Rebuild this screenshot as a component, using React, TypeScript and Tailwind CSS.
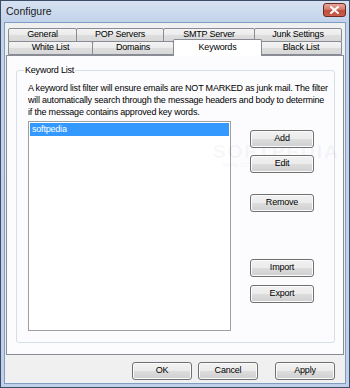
const rowOne = [
  { name: "General", w: 68 },
  { name: "POP Servers", w: 87 },
  { name: "SMTP Server", w: 91 },
  { name: "Junk Settings", w: 87 },
]

const rowTwo = [
  { name: "White List", w: 84 },
  { name: "Domains", w: 81 },
  { name: "Keywords", w: 87, active: true },
  { name: "Black List", w: 81 },
]

const btn =
  "relative z-10 flex items-center justify-center h-[18px] rounded-[3px] border border-[#707070] bg-[linear-gradient(to_bottom,#f2f2f2_0%,#ebebeb_50%,#dddddd_50%,#cfcfcf_100%)] shadow-[inset_0_0_0_1px_#fbfbfb] text-black"

function Tab({ name, w, active }: { name: string; w: number; active?: boolean }) {
  if (active) {
    return (
      <div
        className="relative z-10 -mt-[2px] -mb-[1px] -mx-[1px] h-[17px] flex items-center justify-center border border-b-0 border-[#898c95] bg-white rounded-t-[2px]"
        style={{ width: w + 2 }}
      >
        {name}
      </div>
    )
  }
  return (
    <div
      className="h-[14px] flex items-center justify-center border border-[#898c95] -ml-[1px] first:ml-0 bg-[linear-gradient(to_bottom,#f4f4f4_0%,#ebebeb_50%,#dedede_50%,#d8d8d8_100%)] rounded-t-[2px]"
      style={{ width: w + 1 }}
    >
      {name}
    </div>
  )
}

export default function App() {
  return (
    <div className="w-[350px] h-[388px] flex flex-col border border-[#3b4e69] bg-[linear-gradient(to_bottom,#d6e2f2_0px,#c2d3ea_21px,#bfd0e8_100%)] font-['Liberation_Sans',Arial,sans-serif] text-[9px] tracking-[-0.2px] text-black select-none overflow-hidden">
      <div className="h-[21px] shrink-0 flex items-center justify-between pl-[5px] pr-[3px]">
        <span className="text-[10.5px] tracking-normal text-[#1b1b1b]">Configure</span>
        <div className="w-[23px] h-[14px] -mt-[3px] rounded-[3px] border border-[#6d2a22] bg-[linear-gradient(to_bottom,#e4a79c_0%,#d57a6b_45%,#c24b3a_55%,#c9604d_100%)] flex items-center justify-center">
          <svg width="9" height="8" viewBox="0 0 9 8">
            <path d="M1 1 L8 7 M8 1 L1 7" stroke="#ffffff" strokeWidth="2" strokeLinecap="square" />
          </svg>
        </div>
      </div>

      <div className="flex-1 mx-[3px] mb-[3px] border border-[#7f9dc4] bg-[#f0f0f0] flex flex-col">
        <div className="pt-[5px] pl-[3px]">
          <div className="flex">
            {rowOne.map((t) => (
              <Tab key={t.name} {...t} />
            ))}
          </div>
          <div className="flex -mt-[1px] h-[15px]">
            {rowTwo.map((t) => (
              <Tab key={t.name} {...t} />
            ))}
          </div>
        </div>

        <div className="relative ml-[1px] w-[338px] h-[300px] -mt-[1px] border border-[#898c95] bg-[#fcfcfe] pt-[14px] pl-[9px]">
          <div className="relative w-[319px] h-[273px] border border-[#d5dfe5] rounded-[3px] pt-[11px] pl-[11px]">
            <span className="absolute -top-[7px] left-[7px] bg-[#fcfcfe] px-[1px]">Keyword List</span>
            <p className="leading-[12px] w-[300px]">
              A keyword list filter will ensure emails are NOT MARKED as junk mail. The filter will automatically
              search through the message headers and body to determine if the message contains approved key words.
            </p>
            <div className="flex mt-[3px]">
              <div className="w-[203px] h-[210px] border border-[#a0a0a0] bg-white p-[1px]">
                <div className="h-[13px] bg-[#3399ff] text-white pl-[2px] flex items-center">softpedia</div>
              </div>
              <div className="ml-[19px] w-[64px] flex flex-col pt-[9px]">
                <div className={btn + " border-[#3c7fb1] shadow-[inset_0_0_0_1px_#8fd9f7]"}>Add</div>
                <div className={btn + " mt-[7px]"}>Edit</div>
                <div className={btn + " mt-[21px]"}>Remove</div>
                <div className={btn + " mt-[47px]"}>Import</div>
                <div className={btn + " mt-[8px]"}>Export</div>
              </div>
            </div>
          </div>
          <div className="absolute left-[206px] top-[82px] text-[19px] font-bold tracking-[2px] text-[rgba(0,0,0,0.05)] pointer-events-none">
            SOFTPEDIA
          </div>
          <div className="absolute left-[216px] top-[104px] text-[7px] tracking-normal text-[rgba(0,0,0,0.07)] pointer-events-none">
            www.softpedia.com
          </div>
        </div>

        <div className="flex justify-end pr-[10px] mt-[7px]">
          <div className={btn + " w-[60px]"}>OK</div>
          <div className={btn + " w-[60px] ml-[6px]"}>Cancel</div>
          <div className={btn + " w-[60px] ml-[17px]"}>Apply</div>
        </div>
      </div>
    </div>
  )
}
